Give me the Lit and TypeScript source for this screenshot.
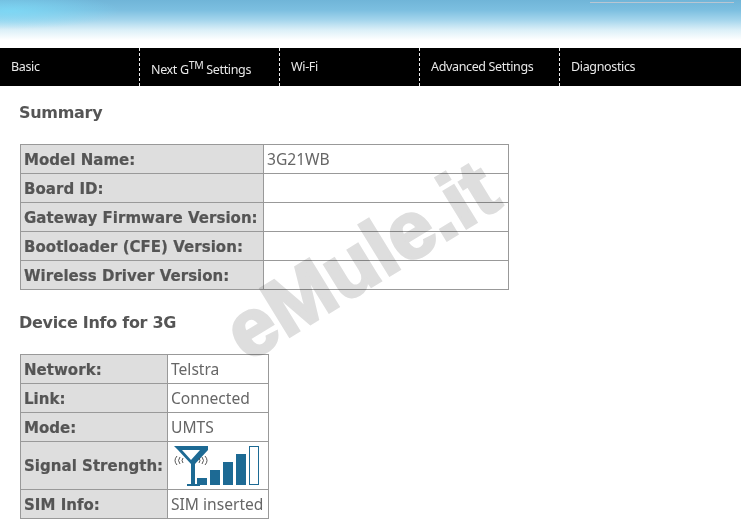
import { LitElement, html, css } from "lit";
import { customElement } from "lit/decorators.js";

const summary = [
  ["Model Name:", "3G21WB"],
  ["Board ID:", ""],
  ["Gateway Firmware Version:", ""],
  ["Bootloader (CFE) Version:", ""],
  ["Wireless Driver Version:", ""],
];

@customElement("app-root")
export class AppRoot extends LitElement {
  static styles = css`
    :host { display: block; position: relative; width: 741px; height: 523px; overflow: hidden; background: #fff; font-family: "DejaVu Sans", sans-serif; color: #555; }
    .banner { height: 48px; position: relative; background:
      radial-gradient(ellipse 110px 18px at 10px 11px, rgba(125,222,250,.75), rgba(125,222,250,0)),
      linear-gradient(180deg, #70b5d8 0px, #7cbfe0 10px, #a4d5ec 20px, #dcf0f8 30px, #fff 40px); }
    .glint { position: absolute; left: 590px; width: 144px; top: 2px; height: 1px; background: #b9c6d3; }
    nav { height: 38px; background: #000; display: flex; color: #e8e8e8; font: 12.5px/38px "Noto Sans", sans-serif; letter-spacing: -.35px; }
    nav div { width: 140px; box-sizing: border-box; padding-left: 11px; white-space: nowrap; }
    nav div:first-child { width: 139px; }
    nav div + div { border-left: 1px dashed #eee; }
    nav .low { padding-top: 3px; }
    nav sup { font-size: 10.5px; line-height: 0; vertical-align: 5px; }
    main { padding-left: 19px; }
    h2 { margin: 0; font: bold 16px/20px "DejaVu Sans", sans-serif; color: #555; letter-spacing: -.3px; }
    .first { padding-top: 17px; }
    .second { padding-top: 23px; }
    table { border-collapse: collapse; margin-left: 1px; table-layout: fixed; }
    .t1 { margin-top: 21px; width: 489px; }
    .t2 { margin-top: 21px; width: 249px; }
    td { border: 1px solid #999; height: 29px; padding: 0 3px; box-sizing: border-box; white-space: nowrap; }
    td.k { background: #dedede; font-weight: bold; font-size: 15px; padding: 1px 0 0 3px; letter-spacing: .03px; -webkit-text-stroke: .2px #555; }
    .t1 td.k { width: 243px; }
    .t2 td.k { width: 147px; }
    td.v { color: #666; font: 15.6px "Noto Sans", sans-serif; background: #fff; padding-bottom: 1px; }
    td.sig { height: 48px; padding: 0 3px; }
    svg.signal { display: block; width: 92px; height: 44px; }
    .mark { position: absolute; left: 210px; top: 220px; font: bold 81px/80px "Liberation Sans", sans-serif; -webkit-text-stroke: 3px #dedede; color: #dedede; transform: rotate(-31.5deg); transform-origin: center; white-space: nowrap; mix-blend-mode: multiply; }
  `;

  row(k: string, v: string) {
    return html`<tr><td class="k">${k}</td><td class="v">${v}</td></tr>`;
  }

  render() {
    return html`
      <div class="banner"><div class="glint"></div></div>
      <nav>
        <div>Basic</div>
        <div class="low">Next G<sup>TM</sup> Settings</div>
        <div>Wi-Fi</div>
        <div>Advanced Settings</div>
        <div>Diagnostics</div>
      </nav>
      <main>
        <h2 class="first">Summary</h2>
        <table class="t1">${summary.map(([k, v]) => this.row(k, v))}</table>
        <h2 class="second">Device Info for 3G</h2>
        <table class="t2">
          ${this.row("Network:", "Telstra")}
          ${this.row("Link:", "Connected")}
          ${this.row("Mode:", "UMTS")}
          <tr>
            <td class="k sig">Signal Strength:</td>
            <td class="v sig">
              <svg class="signal" viewBox="172 443 92 44">
                <g fill="#1d6a94">
                  <path d="M175 445h34v4l-13 14v20h5v2h-13v-2h4v-20l-13-14zM183 449l9 10 9-10z" />
                  <rect x="198" y="477" width="10" height="7" />
                  <rect x="211" y="469" width="10" height="15" />
                  <rect x="224" y="461" width="10" height="23" />
                  <rect x="237" y="453" width="10" height="31" />
                </g>
                <rect x="250.5" y="445.5" width="9" height="38" fill="#fff" stroke="#1d6a94" />
                <g fill="none" stroke="#444" stroke-width=".9">
                  <path d="M184 457q-2 2.5 0 5M181 456q-3 3.5 0 7M178 455q-4 4.5 0 9M200 457q2 2.5 0 5M203 456q3 3.5 0 7M206 455q4 4.5 0 9" />
                </g>
              </svg>
            </td>
          </tr>
          ${this.row("SIM Info:", "SIM inserted")}
        </table>
      </main>
      <div class="mark">eMule.it</div>
    `;
  }
}
